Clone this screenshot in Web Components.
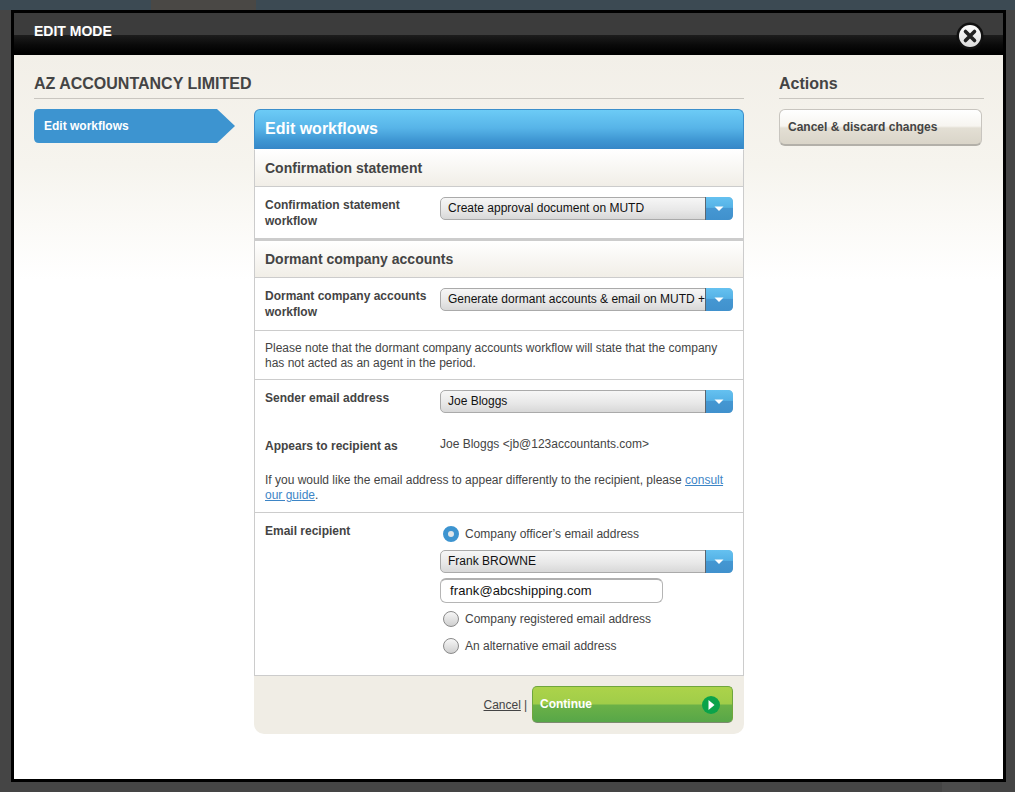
<!DOCTYPE html>
<html>
<head>
<meta charset="utf-8">
<title>Edit mode</title>
<style>
    html, body { margin: 0; padding: 0; }
    body {
        height: 792px;
        overflow: hidden;
        background: #444444;
        font-family: "Liberation Sans", Arial, sans-serif;
        font-size: 12px;
        color: #444;
    }
    a { color: #3d85c6; }
    panel-foot a { color: #444; }
</style>
</head>
<body>
<page-backdrop>
    <edit-modal heading="EDIT MODE">
        <main-column heading="AZ ACCOUNTANCY LIMITED" slot="main">
            <side-tab slot="side">Edit workflows</side-tab>
            <work-panel heading="Edit workflows">
                <section-head>Confirmation statement</section-head>
                <form-row label="Confirmation statement workflow" pad="10" height="52">
                    <drop-select>Create approval document on MUTD</drop-select>
                </form-row>
                <section-head thick>Dormant company accounts</section-head>
                <form-row label="Dormant company accounts workflow" pad="10" height="53">
                    <drop-select>Generate dormant accounts &amp; email on MUTD + </drop-select>
                </form-row>
                <note-row height="48">Please note that the dormant company accounts workflow will state that the company has not acted as an agent in the period.</note-row>
                <sender-block>
                    <form-row label="Sender email address" pad="10" height="52" plain>
                        <drop-select>Joe Bloggs</drop-select>
                    </form-row>
                    <form-row label="Appears to recipient as" pad="4" label-pad="6" height="36" plain>
                        <span>Joe Bloggs &lt;jb@123accountants.com&gt;</span>
                    </form-row>
                    <guide-note>If you would like the email address to appear differently to the recipient, please <a href="#guide">consult</a><br><a href="#guide">our guide</a>.</guide-note>
                </sender-block>
                <form-row label="Email recipient" pad="7" label-pad="10" height="162" plain>
                    <radio-opt checked>Company officer’s email address</radio-opt>
                    <drop-select>Frank BROWNE</drop-select>
                    <text-box>frank@abcshipping.com</text-box>
                    <radio-opt>Company registered email address</radio-opt>
                    <radio-opt>An alternative email address</radio-opt>
                </form-row>
                <panel-foot slot="foot">
                    <a href="#cancel">Cancel</a> |
                    <go-button>Continue</go-button>
                </panel-foot>
            </work-panel>
        </main-column>
        <action-column heading="Actions" slot="aside">
            <plain-button>Cancel &amp; discard changes</plain-button>
        </action-column>
    </edit-modal>
</page-backdrop>

<script>
function shell(name, css, html, setup) {
    customElements.define(name, class extends HTMLElement {
        constructor() {
            super();
            this.attachShadow({mode: 'open'});
            const values = (s) => s.replace(/\{(\w+)\}/g, (m, k) => this.getAttribute(k) || '');
            this.shadowRoot.innerHTML = `<style>${css}</style>${values(html)}`;
            if (setup) setup.call(this);
        }
    });
}

shell('page-backdrop', `
    :host { display: block; height: 792px; background: #454545; }
    .strip { display: flex; height: 10px; background: #3c4a53; }
    .strip i { display: block; width: 105px; margin-left: 151px; background: #4a4845; }
    .wrap { padding: 0 9px 0 11px; }
    .under { display: flex; height: 10px; }
    .under i { display: block; width: 38px; margin-left: 942px; background: #4c4c4c; }
`, `<div class="strip"><i></i></div><div class="wrap"><slot></slot></div><div class="under"><i></i></div>`);

shell('edit-modal', `
    :host { display: block; height: 772px; box-sizing: border-box; border: 3px solid #000; position: relative; background: #fff; }
    header {
        height: 42px; box-sizing: border-box; padding: 10px 0 0 20px;
        background: linear-gradient(#3c3c3c 0, #3c3c3c 22px, #1d1d1d 22px, #0a0a0a 32px, #000 40px);
        color: #fff; font-weight: bold; font-size: 14px; line-height: 16px;
    }
    .body {
        height: 724px; box-sizing: border-box; padding: 18px 19px 0 20px;
        background: linear-gradient(#f2efe8 0, #f6f4ee 110px, #fbfaf7 170px, #fff 225px);
        display: grid; grid-template-columns: 710px 205px; column-gap: 35px; align-items: start;
    }
    .close { position: absolute; right: 19px; top: 9px; width: 28px; height: 28px; }
`, `<header>{heading}</header>
    <div class="body"><slot name="main"></slot><slot name="aside"></slot></div>
    <svg class="close" viewBox="0 0 28 28">
        <defs><linearGradient id="g" x1="0" y1="0" x2="0" y2="1"><stop offset="0" stop-color="#fff"/><stop offset="1" stop-color="#dcdcdc"/></linearGradient></defs>
        <circle cx="14" cy="14" r="13.5" fill="#111"/>
        <circle cx="14" cy="14" r="11" fill="url(#g)"/>
        <path d="M9.5 9.5 18.5 18.5M18.5 9.5 9.5 18.5" stroke="#222" stroke-width="3.6" stroke-linecap="round"/>
    </svg>`);

shell('main-column', `
    :host { display: block; }
    h2 {
        margin: 0 0 10px; height: 26px; box-sizing: border-box; padding-top: 1px;
        border-bottom: 1px solid #c9c6c0;
        font-size: 16px; line-height: 20px; font-weight: bold; color: #444;
    }
    .cols { display: grid; grid-template-columns: 201px 490px; column-gap: 19px; align-items: start; }
`, `<h2>{heading}</h2><div class="cols"><slot name="side"></slot><slot></slot></div>`);

shell('action-column', `
    :host { display: block; }
    h2 {
        margin: 0 0 10px; height: 26px; box-sizing: border-box; padding-top: 1px;
        border-bottom: 1px solid #c9c6c0;
        font-size: 16px; line-height: 20px; font-weight: bold; color: #444;
    }
`, `<h2>{heading}</h2><slot></slot>`);

shell('side-tab', `
    :host { display: block; width: 201px; height: 34px; position: relative; color: #fff; font-weight: bold; font-size: 12px; line-height: 35px; }
    svg { position: absolute; inset: 0; }
    span { position: relative; padding-left: 10px; }
`, `<svg width="201" height="34" viewBox="0 0 201 34"><path d="M5 0H183L201 17 183 34H5Q0 34 0 29V5Q0 0 5 0Z" fill="#3d94d0"/></svg><span><slot></slot></span>`);

shell('work-panel', `
    :host { display: block; width: 490px; }
    .title {
        height: 40px; box-sizing: border-box; padding: 9px 0 0 10px; border: 1px solid #3c8fcb; border-bottom: 0; border-radius: 6px 6px 0 0;
        background: linear-gradient(#6ccbf6 0, #57b4e8 18px, #3f97d3 30px, #3585c6 40px);
        color: #fff; font-weight: bold; font-size: 16px; line-height: 19px;
    }
    .inner { border: solid #ccc; border-width: 0 1px; background: #fff; border-top: 1px solid #fff; }
`, `<div class="title">{heading}</div><div class="inner"><slot></slot></div><slot name="foot"></slot>`);

shell('section-head', `
    :host {
        display: block; height: 37px; box-sizing: border-box; padding: 10px 0 0 10px;
        background: linear-gradient(#fff, #f1eee7);
        border-bottom: 1px solid #ccc;
        font-weight: bold; font-size: 14px; line-height: 17px; color: #444;
    }
    :host([thick]) { border-top: 2px solid #ccc; height: 39px; }
`, `<slot></slot>`);

shell('form-row', `
    :host { display: grid; grid-template-columns: 175px 293px; padding: 0 10px; box-sizing: border-box; border-bottom: 1px solid #ccc; }
    :host([plain]) { border-bottom: 0; }
    .label { font-weight: bold; font-size: 12px; line-height: 16px; color: #444; padding-top: 10px; padding-right: 4px; }
    .ctl { line-height: 16px; }
`, `<div class="label">{label}</div><div class="ctl"><slot></slot></div>`, function () {
    this.style.height = this.getAttribute('height') + 'px';
    this.shadowRoot.querySelector('.ctl').style.paddingTop = this.getAttribute('pad') + 'px';
    if (this.hasAttribute('label-pad')) this.shadowRoot.querySelector('.label').style.paddingTop = this.getAttribute('label-pad') + 'px';
});

shell('note-row', `
    :host { display: block; box-sizing: border-box; padding: 10px 10px 0; border-bottom: 1px solid #ccc; line-height: 15px; }
`, `<slot></slot>`, function () {
    this.style.height = (Number(this.getAttribute('height')) + 1) + 'px';
});

shell('sender-block', `
    :host { display: block; height: 133px; box-sizing: border-box; border-bottom: 1px solid #ccc; }
`, `<slot></slot>`);

shell('guide-note', `
    :host { display: block; padding: 5px 10px 0; line-height: 15px; }
`, `<slot></slot>`);

shell('drop-select', `
    :host { display: block; height: 23px; position: relative; box-sizing: border-box; font-size: 12px; color: #111; }
    .box {
        height: 23px; box-sizing: border-box; padding-left: 7px; padding-right: 27px;
        border: 1px solid #aaa; border-radius: 5px;
        background: linear-gradient(#f6f6f6 0, #e8e8e8 12px, #d6d6d6 22px);
        line-height: 20px; white-space: nowrap; overflow: hidden;
    }
    svg { position: absolute; right: 0; top: 0; }
`, `<div class="box"><slot></slot></div>
    <svg width="28" height="23" viewBox="0 0 28 23">
        <defs><linearGradient id="a" x1="0" y1="0" x2="0" y2="1"><stop offset="0" stop-color="#65c1f0"/><stop offset=".45" stop-color="#55b2e6"/><stop offset=".5" stop-color="#4597d2"/><stop offset="1" stop-color="#4091cd"/></linearGradient></defs>
        <path d="M1 0H23Q28 0 28 5V18Q28 23 23 23H1Z" fill="url(#a)"/>
        <path d="M.5 0V23" stroke="#5b6670"/>
        <path d="M9.5 9.5H18.5L14 14Z" fill="#fff"/>
    </svg>`);

shell('radio-opt', `
    :host { display: flex; align-items: center; gap: 6px; height: 27px; padding-left: 3px; font-size: 12px; color: #444; }
    :host([checked]) { margin-bottom: 3px; }
    i {
        display: block; width: 16px; height: 16px; box-sizing: border-box; border-radius: 50%;
        border: 1px solid #8a8a8a; background: linear-gradient(#f7f7f7, #cfcfcf);
    }
    :host([checked]) i {
        border: 5px solid #3d94d0; background: #dfe6ea;
    }
`, `<i></i><span><slot></slot></span>`);

shell('text-box', `
    :host {
        display: block; width: 223px; height: 25px; box-sizing: border-box; margin: 5px 0 2px;
        border: 1px solid #b5b5b5; border-top: 2px solid #b0b0b0; border-radius: 6px; background: #fff;
        padding-left: 9px; font-size: 13px; line-height: 21px; color: #111; letter-spacing: .1px;
    }
`, `<slot></slot>`);

shell('panel-foot', `
    :host {
        display: flex; justify-content: flex-end; align-items: center; gap: 3px;
        height: 59px; box-sizing: border-box; padding: 0 11px 1px 0;
        background: #f0ede5; border-radius: 0 0 10px 10px; border-top: 1px solid #ccc;
        font-size: 12px; color: #444;
    }
`, `<slot></slot>`);

shell('go-button', `
    :host {
        display: block; width: 201px; height: 37px; margin-left: 2px; box-sizing: border-box; position: relative;
        border: 1px solid #6fa63d; border-bottom: 1px solid #7d8a70; border-radius: 5px;
        background: linear-gradient(#acd34a 0, #a0cd49 17px, #6bb147 18px, #56a648 36px);
        color: #fff; font-weight: bold; font-size: 12px; line-height: 34px; padding-left: 7px;
    }
    svg { position: absolute; right: 12px; top: 9px; }
`, `<slot></slot><svg width="18" height="18" viewBox="0 0 18 18"><circle cx="9" cy="9" r="9" fill="#0ba34a"/><path d="M6.5 4 12.5 9 6.5 14Z" fill="#fff"/></svg>`);

shell('plain-button', `
    :host {
        display: block; width: 203px; height: 37px; box-sizing: border-box;
        border: 1px solid #c8c5bf; border-bottom: 2px solid #b3b0a9; border-radius: 6px;
        background: linear-gradient(#fff 0, #f7f5f0 16px, #e3dfd4 18px, #d9d4c8 35px);
        color: #444; font-weight: bold; font-size: 12px; line-height: 35px; padding-left: 8px;
    }
`, `<slot></slot>`);
</script>
</body>
</html>
